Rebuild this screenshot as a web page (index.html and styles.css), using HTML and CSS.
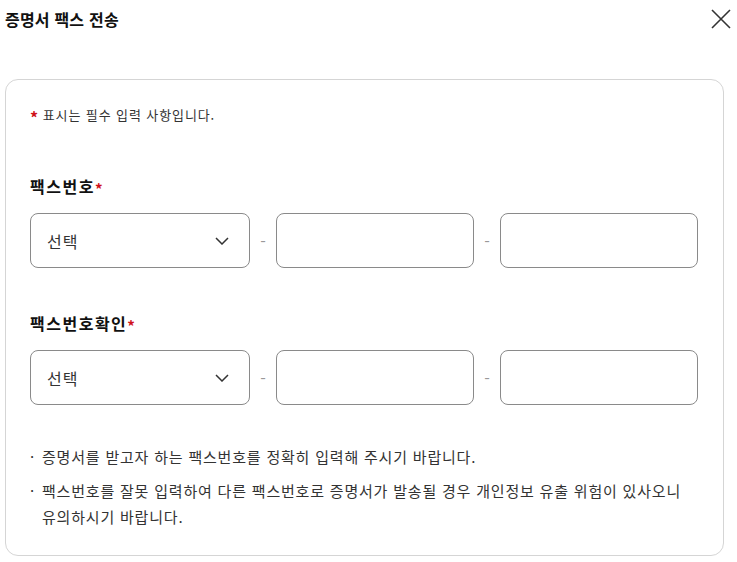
FILE: index.html
```html
<!DOCTYPE html>
<html lang="ko">
<head>
<meta charset="utf-8">
<title>증명서 팩스 전송</title>
<link rel="stylesheet" href="styles.css">
</head>
<body>
<div class="page">
  <header class="header">
    <h1 class="title">증명서 팩스 전송</h1>
    <button class="close" aria-label="닫기">
      <svg width="20" height="20" viewBox="0 0 20 20"><path d="M1 1L19 19M19 1L1 19" stroke="#333" stroke-width="1.6" fill="none"/></svg>
    </button>
  </header>
  <section class="card">
    <p class="required"><span class="star">*</span> 표시는 필수 입력 사항입니다.</p>

    <div class="field">
      <div class="label">팩스번호<span class="star">*</span></div>
      <div class="row">
        <div class="select"><span>선택</span>
          <svg width="14" height="8" viewBox="0 0 14 8"><path d="M1 1L7 7L13 1" stroke="#333" stroke-width="1.5" fill="none"/></svg>
        </div>
        <span class="dash">-</span>
        <div class="input"></div>
        <span class="dash">-</span>
        <div class="input"></div>
      </div>
    </div>

    <div class="field field2">
      <div class="label">팩스번호확인<span class="star">*</span></div>
      <div class="row">
        <div class="select"><span>선택</span>
          <svg width="14" height="8" viewBox="0 0 14 8"><path d="M1 1L7 7L13 1" stroke="#333" stroke-width="1.5" fill="none"/></svg>
        </div>
        <span class="dash">-</span>
        <div class="input"></div>
        <span class="dash">-</span>
        <div class="input"></div>
      </div>
    </div>

    <ul class="notes">
      <li>증명서를 받고자 하는 팩스번호를 정확히 입력해 주시기 바랍니다.</li>
      <li>팩스번호를 잘못 입력하여 다른 팩스번호로 증명서가 발송될 경우 개인정보 유출 위험이 있사오니 유의하시기 바랍니다.</li>
    </ul>
  </section>
</div>
</body>
</html>
```
FILE: styles.css
```css
* { box-sizing: border-box; }
html, body { margin: 0; padding: 0; background: #fff; }
body {
  font-family: "Noto Sans CJK KR", "Noto Sans", sans-serif;
  color: #333;
}
.page { padding: 0 6px 0 5px; }
.header {
  display: flex;
  align-items: center;
  justify-content: space-between;
  height: 37px;
}
.title {
  margin: 0;
  font-size: 16px;
  font-weight: 700;
  color: #111;
  line-height: 22px;
  letter-spacing: 0.2px;
}
.close {
  border: 0;
  background: none;
  padding: 0;
  width: 20px;
  height: 20px;
  display: flex;
}
.card {
  margin: 42px 7px 0 0;
  border: 1px solid #d5d5d5;
  border-radius: 13px;
  padding: 26px 25px 25px 24px;
}
.required {
  margin: 0;
  height: 18px;
  font-size: 13px;
  line-height: 18px;
  letter-spacing: 0.9px;
  color: #333;
}
.star { color: #d0111b; font-weight: 700; line-height: 1; }
.required .star { font-size: 16px; vertical-align: -4px; letter-spacing: 0; }
.field { margin-top: 51px; }
.field2 { margin-top: 44px; }
.label {
  height: 22px;
  font-size: 16px;
  font-weight: 700;
  line-height: 22px;
  color: #111;
  letter-spacing: 1.5px;
}
.label .star { font-size: 15px; margin-left: 0; vertical-align: -2px; }
.row {
  display: flex;
  align-items: center;
  margin-top: 16px;
}
.select, .input {
  height: 55px;
  border: 1px solid #8a8a8a;
  border-radius: 8px;
}
.select {
  width: 220px;
  display: flex;
  align-items: center;
  justify-content: space-between;
  padding: 0 20px 0 16px;
  font-size: 16px;
  letter-spacing: 1px;
  color: #333;
}
.input { flex: 1; }
.dash {
  width: 26px;
  text-align: center;
  color: #999;
  font-size: 16px;
}
.notes {
  list-style: none;
  margin: 39px 0 0;
  padding: 0;
  font-size: 15px;
  line-height: 26px;
  letter-spacing: 0.8px;
  color: #333;
}
.notes li {
  position: relative;
  padding-left: 12px;
}
.notes li + li { margin-top: 8px; }
.notes li::before {
  content: "·";
  position: absolute;
  left: 0;
  top: 0;
  letter-spacing: 0;
}
```
